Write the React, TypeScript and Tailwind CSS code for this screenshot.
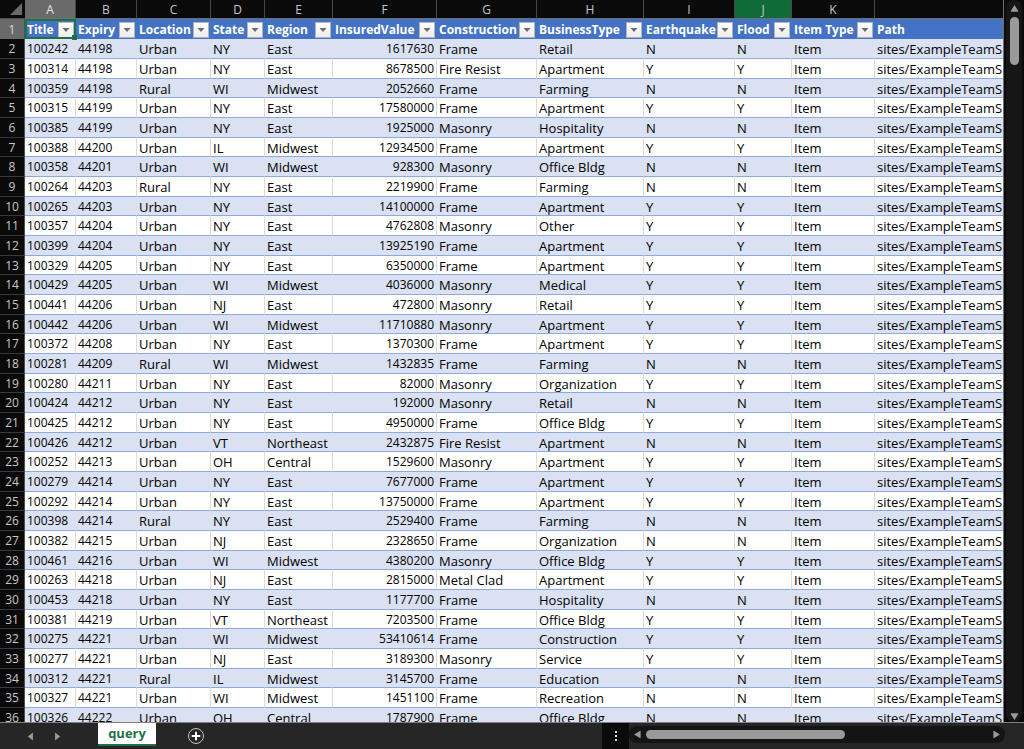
import { Plus } from "lucide-react";
import clsx from "clsx";

type Column = {
  letter: string;
  title: string;
  width: string;
  digits?: boolean;
  alignRight?: boolean;
};

const COLUMNS: Column[] = [
  { letter: "A", title: "Title", width: "w-[51px]", digits: true },
  { letter: "B", title: "Expiry", width: "w-[61px]", digits: true },
  { letter: "C", title: "Location", width: "w-[74px]" },
  { letter: "D", title: "State", width: "w-[54px]" },
  { letter: "E", title: "Region", width: "w-[68px]" },
  { letter: "F", title: "InsuredValue", width: "w-[104px]", digits: true, alignRight: true },
  { letter: "G", title: "Construction", width: "w-[100px]" },
  { letter: "H", title: "BusinessType", width: "w-[107px]" },
  { letter: "I", title: "Earthquake", width: "w-[91px]" },
  { letter: "J", title: "Flood", width: "w-[57px]" },
  { letter: "K", title: "Item Type", width: "w-[83px]" },
  { letter: "", title: "Path", width: "" },
];

// title|expiry|location|state|region|value|construction|business|earthquake|flood
const RECORDS = `
100242|44198|Urban|NY|East|1617630|Frame|Retail|N|N
100314|44198|Urban|NY|East|8678500|Fire Resist|Apartment|Y|Y
100359|44198|Rural|WI|Midwest|2052660|Frame|Farming|N|N
100315|44199|Urban|NY|East|17580000|Frame|Apartment|Y|Y
100385|44199|Urban|NY|East|1925000|Masonry|Hospitality|N|N
100388|44200|Urban|IL|Midwest|12934500|Frame|Apartment|Y|Y
100358|44201|Urban|WI|Midwest|928300|Masonry|Office Bldg|N|N
100264|44203|Rural|NY|East|2219900|Frame|Farming|N|N
100265|44203|Urban|NY|East|14100000|Frame|Apartment|Y|Y
100357|44204|Urban|NY|East|4762808|Masonry|Other|Y|Y
100399|44204|Urban|NY|East|13925190|Frame|Apartment|Y|Y
100329|44205|Urban|NY|East|6350000|Frame|Apartment|Y|Y
100429|44205|Urban|WI|Midwest|4036000|Masonry|Medical|Y|Y
100441|44206|Urban|NJ|East|472800|Masonry|Retail|Y|Y
100442|44206|Urban|WI|Midwest|11710880|Masonry|Apartment|Y|Y
100372|44208|Urban|NY|East|1370300|Frame|Apartment|Y|Y
100281|44209|Rural|WI|Midwest|1432835|Frame|Farming|N|N
100280|44211|Urban|NY|East|82000|Masonry|Organization|Y|Y
100424|44212|Urban|NY|East|192000|Masonry|Retail|N|N
100425|44212|Urban|NY|East|4950000|Frame|Office Bldg|Y|Y
100426|44212|Urban|VT|Northeast|2432875|Fire Resist|Apartment|N|N
100252|44213|Urban|OH|Central|1529600|Masonry|Apartment|Y|Y
100279|44214|Urban|NY|East|7677000|Frame|Apartment|Y|Y
100292|44214|Urban|NY|East|13750000|Frame|Apartment|Y|Y
100398|44214|Rural|NY|East|2529400|Frame|Farming|N|N
100382|44215|Urban|NJ|East|2328650|Frame|Organization|N|N
100461|44216|Urban|WI|Midwest|4380200|Masonry|Office Bldg|Y|Y
100263|44218|Urban|NJ|East|2815000|Metal Clad|Apartment|Y|Y
100453|44218|Urban|NY|East|1177700|Frame|Hospitality|N|N
100381|44219|Urban|VT|Northeast|7203500|Frame|Office Bldg|Y|Y
100275|44221|Urban|WI|Midwest|53410614|Frame|Construction|Y|Y
100277|44221|Urban|NJ|East|3189300|Masonry|Service|Y|Y
100312|44221|Rural|IL|Midwest|3145700|Frame|Education|N|N
100327|44221|Urban|WI|Midwest|1451100|Frame|Recreation|N|N
100326|44222|Urban|OH|Central|1787900|Frame|Office Bldg|N|N
`
  .trim()
  .split("\n")
  .map((line) => [...line.split("|"), "Item", "sites/ExampleTeamS"]);

function FilterButton({ title }: { title: string }) {
  return (
    <button
      type="button"
      aria-label={`Filter ${title}`}
      className="flex h-4 w-4 shrink-0 items-center justify-center border border-[#b4b4b4] bg-linear-to-b from-white to-[#ececec]"
    >
      <svg width="8" height="4" viewBox="0 0 8 4" fill="#6b6b6b">
        <path d="M0.5 0h7L4 4z" />
      </svg>
    </button>
  );
}

function Arrow({ dir, className }: { dir: "up" | "down" | "left" | "right"; className: string }) {
  const paths = {
    up: "M5 1.2 9 7.6Q9.3 8.5 8.4 8.5H1.6Q.7 8.5 1 7.6Z",
    down: "M5 8.8 9 2.4Q9.3 1.5 8.4 1.5H1.6Q.7 1.5 1 2.4Z",
    left: "M1.2 5 7.6 1Q8.5.7 8.5 1.6V8.4Q8.5 9.3 7.6 9Z",
    right: "M8.8 5 2.4 1Q1.5.7 1.5 1.6V8.4Q1.5 9.3 2.4 9Z",
  };
  return (
    <svg viewBox="0 0 10 10" fill="currentColor" preserveAspectRatio="none" className={className}>
      <path d={paths[dir]} />
    </svg>
  );
}

function Sheet() {
  return (
    <table className="w-full table-fixed border-separate border-spacing-0 bg-white text-xs leading-4 text-black">
      <colgroup>
        <col className="w-[25px]" />
        {COLUMNS.map((col) => (
          <col key={col.title} className={col.width} />
        ))}
      </colgroup>
      <thead>
        <tr className="h-[19px] bg-[#0a0a0a] text-[#c8c8c8]">
          <td className="border-b border-[#505050] p-0 pr-[3px]">
            <svg width="12" height="12" viewBox="0 0 12 12" fill="#6a6a6a" className="ml-auto">
              <path d="M12 0v12H0z" />
            </svg>
          </td>
          {COLUMNS.map((col) => (
            <th
              key={col.title}
              scope="col"
              className={clsx(
                "border-b border-[#707070] p-0 pt-px text-center font-normal",
                col.letter && "border-r border-r-[#484848]",
                col.letter === "A" && "bg-[#6a6a6a] text-[#e4e4e4]",
                col.letter === "J" && "bg-[#0f6b38]",
              )}
            >
              {col.letter}
            </th>
          ))}
        </tr>
        <tr className="h-5 bg-[#4472c4] text-white">
          <th
            scope="row"
            className="border-r border-[#505050] bg-[#6a6a6a] p-0 pt-[2px] text-center font-normal text-[#d8d8d8]"
          >
            1
          </th>
          {COLUMNS.map((col) => (
            <th key={col.title} scope="col" className="relative p-0 pt-[2px] pl-[2px] text-left font-bold">
              <div className="flex items-center justify-between pr-[2px]">
                <span className="whitespace-nowrap">{col.title}</span>
                {col.letter && <FilterButton title={col.title} />}
              </div>
              {col.letter === "A" && (
                <div className="pointer-events-none absolute inset-0 z-10 border-2 border-[#1e7145]">
                  <div className="absolute -right-[3px] -bottom-[3px] h-[5px] w-[5px] bg-[#1e7145]" />
                </div>
              )}
            </th>
          ))}
        </tr>
      </thead>
      <tbody className="[&>tr]:h-5 [&>tr:nth-child(3n)]:h-[19px]">
        {RECORDS.map((record, i) => (
          <tr key={record[0]} className={i % 2 === 0 ? "bg-[#d9e1f2]" : "bg-white"}>
            <th
              scope="row"
              className="border-r border-b border-[#3a3a3a] border-r-[#505050] bg-[#0a0a0a] p-0 pt-px text-center font-normal text-[#c8c8c8]"
            >
              {i + 2}
            </th>
            {record.map((value, c) => (
              <td
                key={COLUMNS[c].title}
                className={clsx(
                  "overflow-hidden border-b border-b-[#8ea9db] px-[2px] pt-px pb-0 whitespace-nowrap",
                  COLUMNS[c].letter && "border-r",
                  i % 2 === 0 ? "border-r-[#d9e1f2]" : "border-r-[#dcdcdc]",
                  COLUMNS[c].digits ? "text-xs leading-4" : "text-[13px] leading-4",
                  COLUMNS[c].alignRight && "text-right",
                )}
              >
                {value}
              </td>
            ))}
          </tr>
        ))}
      </tbody>
    </table>
  );
}

function VerticalScroll() {
  return (
    <div className="flex w-[21px] shrink-0 justify-center border-l border-[#707070] bg-[#0a0a0a]">
      <div className="flex w-4 flex-col items-center rounded-lg bg-[#161616] pt-1 text-[#9a9a9a]">
        <Arrow dir="up" className="h-[9px] w-[9px]" />
        <div className="mt-1 h-12 w-[9px] rounded-full bg-[#9a9a9a]" />
        <Arrow dir="down" className="mt-auto mb-px h-[9px] w-[9px]" />
      </div>
    </div>
  );
}

function SheetBar() {
  return (
    <footer className="flex h-[27px] shrink-0 border-t border-[#808080] bg-[#262626] text-[#9a9a9a]">
      <nav className="flex w-[98px] items-center gap-5 pl-[27px]">
        <button type="button" aria-label="Previous sheet">
          <Arrow dir="left" className="h-[9px] w-[7px]" />
        </button>
        <button type="button" aria-label="Next sheet">
          <Arrow dir="right" className="h-[9px] w-[7px]" />
        </button>
      </nav>
      <button
        type="button"
        className="h-[23px] w-[58px] border-b-2 border-[#1e7145] bg-white pt-px text-[13px] font-bold text-[#217346]"
      >
        query
      </button>
      <button
        type="button"
        aria-label="New sheet"
        className="my-auto ml-8 flex h-4 w-4 items-center justify-center rounded-full border border-[#c8c8c8] text-white"
      >
        <Plus size={12} strokeWidth={4} />
      </button>
      <div className="ml-auto flex w-[27px] flex-col items-center justify-center gap-[2px] bg-[#0a0a0a]">
        <span className="h-[2px] w-[2px] bg-[#e0e0e0]" />
        <span className="h-[2px] w-[2px] bg-[#e0e0e0]" />
        <span className="h-[2px] w-[2px] bg-[#e0e0e0]" />
      </div>
      <div className="mt-[3px] mr-[19px] flex h-[17px] w-[376px] items-center rounded-lg bg-[#141414] px-1">
        <Arrow dir="left" className="h-[9px] w-[9px]" />
        <div className="ml-1 h-[9px] w-[199px] rounded-full bg-[#9a9a9a]" />
        <Arrow dir="right" className="ml-auto h-[9px] w-[9px]" />
      </div>
    </footer>
  );
}

export default function App() {
  return (
    <div className="flex h-screen flex-col overflow-hidden bg-[#0a0a0a] font-['Open_Sans',sans-serif]">
      <div className="flex min-h-0 flex-1">
        <main className="min-w-0 flex-1 overflow-hidden">
          <Sheet />
        </main>
        <VerticalScroll />
      </div>
      <SheetBar />
    </div>
  );
}
